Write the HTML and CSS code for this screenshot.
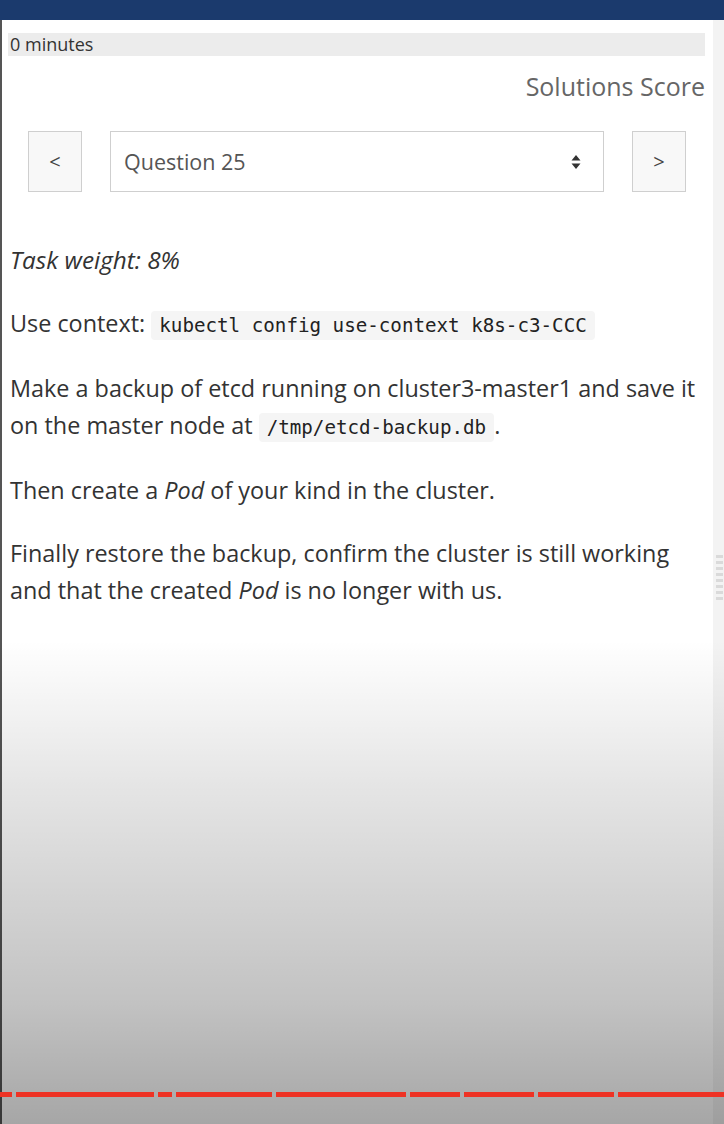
FILE: index.html
```html
<!DOCTYPE html>
<html lang="en">
<head>
<meta charset="utf-8">
<title>Question 25</title>
<link rel="stylesheet" href="styles.css">
</head>
<body>
<div class="topbar"></div>
<div class="page">
  <main class="main">
    <div class="timer">0 minutes</div>
    <div class="score-row"><span class="score">Solutions Score</span></div>
    <div class="nav">
      <button class="nav-btn">&lt;</button>
      <div class="select">
        <span class="select-text">Question 25</span>
        <svg class="select-icon" width="10" height="16" viewBox="0 0 10 16"><path d="M5 1 L9.5 6.5 H0.5 Z M5 15 L9.5 9.5 H0.5 Z" fill="#333"/></svg>
      </div>
      <button class="nav-btn">&gt;</button>
    </div>
    <div class="content">
      <p><em class="weight">Task weight: 8%</em></p>
      <p>Use context: <code>kubectl config use-context k8s-c3-CCC</code></p>
      <p>Make a backup of etcd running on cluster3-master1 and save it on the master node at <code>/tmp/etcd-backup.db</code>.</p>
      <p>Then create a <em>Pod</em> of your kind in the cluster.</p>
      <p>Finally restore the backup, confirm the cluster is still working and that the created <em>Pod</em> is no longer with us.</p>
    </div>
  </main>
  <aside class="rail">
    <div class="grip"></div>
  </aside>
</div>
<div class="shade">
  <div class="progress">
    <span class="seg" style="width:12px"></span>
    <span class="seg" style="width:138px"></span>
    <span class="seg" style="width:14px"></span>
    <span class="seg" style="width:96px"></span>
    <span class="seg" style="width:130px"></span>
    <span class="seg" style="width:50px"></span>
    <span class="seg" style="width:70px"></span>
    <span class="seg" style="width:76px"></span>
    <span class="seg seg-last"></span>
  </div>
</div>
</body>
</html>
```
FILE: styles.css
```css
html, body {
  margin: 0;
  padding: 0;
  height: 100%;
}
body {
  font-family: "Open Sans", "Liberation Sans", sans-serif;
  color: #333;
  background: #fff;
  position: relative;
  overflow: hidden;
}
.topbar {
  height: 20px;
  background: #1b3a6d;
}
.page {
  display: flex;
  min-height: 1104px;
  border-left: 2px solid #555;
}
.main {
  flex: 1;
  padding-left: 6px;
  padding-right: 8px;
}
.rail {
  width: 11px;
  background: #f3f3f3;
  position: relative;
}
.grip {
  position: absolute;
  left: 3px;
  top: 535px;
  width: 7px;
  height: 48px;
  background: repeating-linear-gradient(#dadada 0 3px, transparent 3px 6px);
}
.timer {
  margin-top: 13px;
  height: 23px;
  line-height: 23px;
  background: #ececec;
  font-size: 18px;
  padding-left: 2px;
  color: #333;
}
.score-row {
  text-align: right;
  margin-top: 14px;
}
.score {
  font-size: 25px;
  color: #666;
  line-height: 33px;
}
.nav {
  display: flex;
  align-items: stretch;
  gap: 28px;
  margin: 28px 0 0 20px;
  height: 61px;
}
.nav-btn {
  width: 54px;
  border: 1px solid #cfcfcf;
  background: #f8f8f8;
  font-family: "Open Sans", sans-serif;
  font-size: 20px;
  color: #444;
  padding: 0;
}
.select {
  width: 494px;
  box-sizing: border-box;
  border: 1px solid #cfcfcf;
  background: #fff;
  display: flex;
  align-items: center;
  justify-content: space-between;
  padding: 0 22px 0 13px;
}
.select-text {
  font-size: 21.5px;
  color: #555;
}
.content {
  margin-top: 49px;
  padding-left: 2px;
  font-size: 23.4px;
  line-height: 37px;
}
.content p {
  margin: 0 0 26px;
}
.weight {
  font-size: 24.3px;
}
code {
  font-family: "DejaVu Sans Mono", "Liberation Mono", monospace;
  font-size: 19.2px;
  background: #f5f5f5;
  border-radius: 4px;
  padding: 3px 8px;
  color: #222;
}
.shade {
  position: absolute;
  left: 0;
  right: 0;
  top: 640px;
  bottom: 0;
  background: linear-gradient(rgba(0,0,0,0), rgba(0,0,0,0.1) 30%, rgba(0,0,0,0.24) 75%, rgba(0,0,0,0.35));
}
.progress {
  position: absolute;
  left: 0;
  right: 0;
  top: 452px;
  height: 5px;
  display: flex;
  gap: 4px;
}
.seg {
  background: #ee3224;
  height: 5px;
}
.seg-last {
  flex: 1;
}
```
